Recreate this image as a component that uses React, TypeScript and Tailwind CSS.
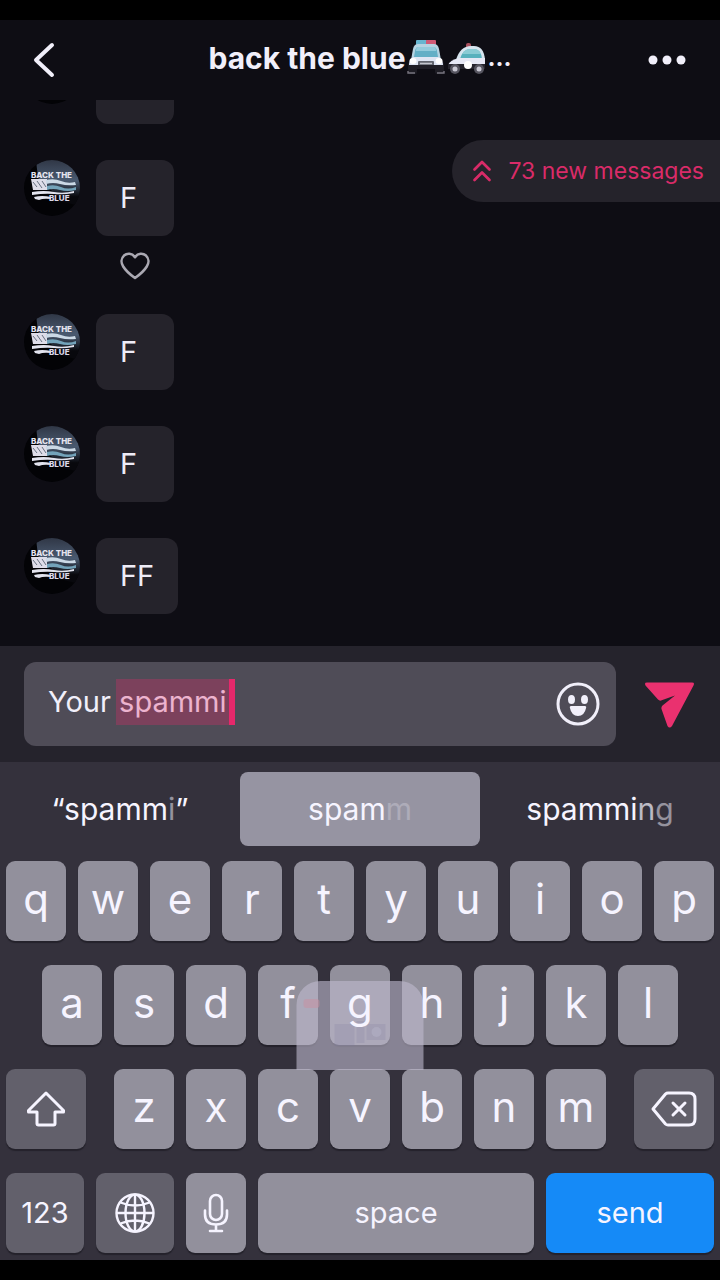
import React, { useState } from 'react';
import { ChevronsUp } from 'lucide-react';

interface Message {
  id: number;
  text: string;
  likeable?: boolean;
}

// the oldest entry is scrolled almost out of view, only its lower edge shows
const messages: Message[] = [
  { id: 1, text: '' },
  { id: 2, text: 'F', likeable: true },
  { id: 3, text: 'F' },
  { id: 4, text: 'F' },
  { id: 5, text: 'FF' },
];

const topRow = ['q', 'w', 'e', 'r', 't', 'y', 'u', 'i', 'o', 'p'];
const middleRow = ['a', 's', 'd', 'f', 'g', 'h', 'j', 'k', 'l'];
const bottomRow = ['z', 'x', 'c', 'v', 'b', 'n', 'm'];

const PoliceCarFront = () => (
  <svg viewBox="0 0 40 36" className="h-9 w-10" aria-hidden="true">
    <rect x="2" y="22" width="9" height="12" rx="2" fill="#1d1c24" />
    <rect x="29" y="22" width="9" height="12" rx="2" fill="#1d1c24" />
    <path d="M2 31v2h7M38 31v2h-7" fill="none" stroke="#77747f" strokeWidth="1.4" />
    <rect x="10" y="0" width="11" height="5" rx="1" fill="#67b5d0" />
    <rect x="20" y="0" width="10" height="5" rx="1" fill="#cf5a76" />
    <path d="M12 4h16q4 0 5 5l2 11H5L7 9q1-5 5-5z" fill="#b5d3e2" />
    <path d="M12 7h16q2 0 3 4l1 6H8l1-6q1-4 3-4z" fill="#63afc6" />
    <path d="M12 7h16q2 0 2 4H10q0-4 2-4z" fill="#93cbdc" />
    <path d="M7 17h26q4 3 4 8H3q0-5 4-8z" fill="#dfe5f3" />
    <ellipse cx="7" cy="21" rx="3.5" ry="3" fill="#fff" />
    <ellipse cx="33" cy="21" rx="3.5" ry="3" fill="#fff" />
    <rect x="12" y="21" width="16" height="5" rx="1" fill="#62656f" />
    <path d="M14 23.500h12" stroke="#c4c6ce" strokeWidth="1.500" />
    <path d="M3 25h34v4H3z" fill="#1f1e26" />
  </svg>
);

const PoliceCarSide = () => (
  <svg viewBox="0 0 42 36" className="h-9 w-[42px]" aria-hidden="true">
    <rect x="20" y="3" width="5" height="6" rx="2" fill="#a84f5d" />
    <path d="M10 20q4-14 15-14h3q10 0 11 14z" fill="#d6e4ee" />
    <path d="M14 19q3-10 10-10h4q7 0 8 10z" fill="#58b1bd" />
    <path d="M16 14q3-5 8-5h4q5 0 7 5z" fill="#8acbd4" />
    <path d="M2 25q2-5 11-7h26v8H2z" fill="#e6e8f5" />
    <path d="M2 24h37v5H2z" fill="#25242d" />
    <circle cx="22" cy="25" r="4" fill="#fff" />
    <circle cx="9" cy="29" r="5" fill="#55545f" />
    <circle cx="9" cy="29" r="2.500" fill="#c9c8d3" />
    <circle cx="33" cy="29" r="5" fill="#55545f" />
    <circle cx="33" cy="29" r="2.500" fill="#c9c8d3" />
  </svg>
);

const Avatar: React.FC<{ captioned: boolean }> = ({ captioned }) => (
  <svg viewBox="0 0 56 56" className="size-14 shrink-0 rounded-full" role="img" aria-label="Avatar">
    <defs>
      <linearGradient id="sky" x1="0" y1="0" x2="0" y2="1">
        <stop offset="0" stopColor="#303746" />
        <stop offset="0.45" stopColor="#4a5a70" />
        <stop offset="0.8" stopColor="#08080d" />
      </linearGradient>
    </defs>
    <rect width="56" height="56" fill="#030306" />
    <path d="M12 0h44v46l-16-4L14 18z" fill="url(#sky)" />
    <path d="M7 19h16v11H9z" fill="#dedde9" />
    <path d="M9 22l4 5M13 21l5 7M18 21l4 6" stroke="#66707f" strokeWidth="1" />
    <path d="M22 20q8-2 15 1t14 1l1 3q-9 1-16-1t-14 0z" fill="#cbd9e6" />
    <path d="M23 26q7-2 14 1t15 0v3q-9 2-16 0t-13 0z" fill="#73a3ba" />
    <path d="M8 32q12-2 22 0t20-1v2q-11 2-20 1T8 35zM10 37q8-2 17 0v2q-8-1-12 1l-4-1z" fill="#e2e3ee" />
    {captioned && (
      <>
        <text x="7" y="18" fontSize="8" fontWeight="800" fontFamily="Inter, sans-serif" fill="#e5e4ef">BACK THE</text>
        <text x="25" y="41" fontSize="8" fontWeight="800" fontFamily="Inter, sans-serif" fill="#dcd8e8">BLUE</text>
      </>
    )}
  </svg>
);

const MessageRow: React.FC<{ message: Message }> = ({ message }) => (
  <li className="flex items-start gap-4 px-6">
    <Avatar captioned={message.text !== ''} />
    <div className="flex flex-col items-start">
      <p className="h-19 min-w-[78px] rounded-xl bg-[#25232b] px-6 pt-5 text-[29px] leading-9 text-[#eeecf7]">
        {message.text}
      </p>
      {message.likeable && (
        <button type="button" aria-label="Like" className="mt-[18px] flex h-6 w-[78px] items-center justify-center">
          <svg viewBox="0 0 30 28" className="h-7 w-[30px] shrink-0" fill="none" stroke="#aaa8b2" strokeWidth="2.6" strokeLinejoin="round">
            <path d="M15 5.200C12 .9 7 1 4 3.600 1 6.400.9 11 3.200 14.500 5.600 18.400 10 22.500 15 26c5-3.500 9.400-7.600 11.800-11.500C29.100 11 29 6.400 26 3.600 23 1 18 .9 15 5.200z" />
          </svg>
        </button>
      )}
    </div>
  </li>
);

interface KeyProps {
  label: string;
  children?: React.ReactNode;
  dark?: boolean;
}

const Key: React.FC<KeyProps> = ({ label, children, dark }) => (
  <button
    type="button"
    aria-label={label}
    className={`flex h-20 min-w-0 flex-1 items-center justify-center rounded-[9px] text-[#f6f4ff] shadow-[0_2px_1px_#24222b] ${dark ? 'bg-[#62606b]' : 'bg-[#92909c]'}`}
  >
    {children ?? <span className="relative z-20 pb-1 text-[42px] leading-none">{label}</span>}
  </button>
);

const App: React.FC = () => {
  const [draft, setDraft] = useState('Your spammi');

  return (
    <div className="flex h-screen flex-col overflow-hidden bg-black py-5 font-[Inter,sans-serif]">
      <header className="flex h-20 shrink-0 items-center justify-between bg-[#0e0d14] px-8 text-[#f1effa]">
        <button type="button" aria-label="Back" className="flex w-10 items-center">
          <svg viewBox="0 0 24 36" className="h-9 w-6" fill="none" stroke="currentColor" strokeWidth="4" strokeLinecap="round" strokeLinejoin="round">
            <path d="M20 3L4 18l16 15" />
          </svg>
        </button>
        <h1 className="flex items-center pb-1 text-[30px] leading-9 font-bold">
          back the blue
          <PoliceCarFront />
          <PoliceCarSide />
          <span className="text-2xl">...</span>
        </h1>
        <button type="button" aria-label="More" className="flex w-10 items-center justify-end">
          <svg viewBox="0 0 40 10" className="h-[10px] w-10" fill="currentColor">
            <circle cx="5" cy="5" r="4.500" />
            <circle cx="19" cy="5" r="4.500" />
            <circle cx="33" cy="5" r="4.500" />
          </svg>
        </button>
      </header>

      <main className="relative flex min-h-0 flex-1 flex-col justify-end overflow-hidden bg-[#0e0d14] pb-8">
        <ul className="flex flex-col gap-9">
          {messages.map(message => (
            <MessageRow key={message.id} message={message} />
          ))}
        </ul>
        <button
          type="button"
          className="absolute top-10 right-0 flex h-[62px] items-center gap-2 rounded-l-full bg-[#25232b] pr-4 pl-3 text-[23px] text-[#d92b68]"
        >
          <ChevronsUp className="size-9" strokeWidth={1.8} />
          73 new messages
        </button>
      </main>

      <form className="flex h-[116px] shrink-0 items-center gap-7 bg-[#25232c] px-6" onSubmit={e => e.preventDefault()}>
        <div className="relative flex h-21 flex-1 items-center rounded-xl bg-[#4f4c57] pr-4 pl-6">
          <input
            type="text"
            aria-label="Message"
            value={draft}
            onChange={e => setDraft(e.target.value)}
            className="min-w-0 flex-1 bg-transparent pb-1 text-[29px] leading-9 text-[#f1effa] outline-none"
          />
          {/* marked text with the caret at its end */}
          <span className="pointer-events-none absolute top-[17px] left-[92px] h-[46px] w-[119px] border-r-6 border-[#e6286b] bg-[#e6286b]/30" />
          <button type="button" aria-label="Emoji" className="text-[#f1effa]">
            <svg viewBox="0 0 44 44" className="size-11">
              <circle cx="22" cy="22" r="20" fill="none" stroke="currentColor" strokeWidth="3" />
              <ellipse cx="15.500" cy="17.500" rx="3.500" ry="4.500" fill="currentColor" />
              <ellipse cx="28.500" cy="17.500" rx="3.500" ry="4.500" fill="currentColor" />
              <path d="M15 24h14q1.500 0 1.200 1.500Q28.500 34 22 34t-8.200-8.500Q13.500 24 15 24z" fill="currentColor" />
            </svg>
          </button>
        </div>
        <button type="submit" aria-label="Send message">
          <svg viewBox="0 0 52 48" className="h-12 w-[52px]" fill="#ea316f">
            <path d="M3 2.500h45q3 0 1.500 3L28 46q-2.500 3-4.500 0L17.500 29q-.5-2 1-3.500L31 15.500 17 20.500q-1.500.5-3-1L1.500 5.500Q0 2.500 3 2.500z" />
          </svg>
        </button>
      </form>

      <section aria-label="Keyboard" className="relative shrink-0 bg-[#34313c] pb-[7px]">
        <div className="grid grid-cols-3 pt-[10px] pb-[15px] text-[30px] text-[#f6f4ff]">
          <button type="button" className="h-[74px]">
            “spamm<span className="opacity-50">i</span>”
          </button>
          <button type="button" className="h-[74px] rounded-lg bg-[#9694a2]">
            spam<span className="opacity-25">m</span>
          </button>
          <button type="button" className="h-[74px]">
            spammi<span className="opacity-70">n</span><span className="opacity-50">g</span>
          </button>
        </div>

        <div className="flex flex-col gap-6">
          <div className="flex gap-3 px-[6px]">
            {topRow.map(k => <Key key={k} label={k} />)}
          </div>
          <div className="flex gap-3 px-[42px]">
            {middleRow.map(k => <Key key={k} label={k} />)}
          </div>
          <div className="grid grid-cols-[80fr_492fr_80fr] gap-7 px-[6px]">
            <Key label="Shift" dark>
              <svg viewBox="0 0 40 36" className="h-9 w-10" fill="none" stroke="currentColor" strokeWidth="3" strokeLinejoin="round">
                <path d="M20 2L2.500 19.500v1.500H11v11.500q0 1.500 1.500 1.500h15q1.500 0 1.500-1.500V21h8.500v-1.500z" />
              </svg>
            </Key>
            <div className="flex gap-3">
              {bottomRow.map(k => <Key key={k} label={k} />)}
            </div>
            <Key label="Backspace" dark>
              <svg viewBox="0 0 46 36" className="h-9 w-[46px]" fill="none" stroke="currentColor" strokeWidth="3" strokeLinejoin="round" strokeLinecap="round">
                <path d="M17 2h21q6 0 6 6v20q0 6-6 6H17q-1.500 0-2.500-1L2 18 14.500 3q1-1 2.500-1z" />
                <path d="M22 12l12 12M34 12L22 24" />
              </svg>
            </Key>
          </div>
          <div className="grid grid-cols-[78fr_78fr_60fr_276fr_168fr] gap-3 px-[6px] text-[29px]">
            <Key label="123" dark>123</Key>
            <Key label="Next keyboard" dark>
              <svg viewBox="0 0 40 40" className="size-10" fill="none" stroke="currentColor" strokeWidth="2.400">
                <circle cx="20" cy="20" r="18.500" />
                <ellipse cx="20" cy="20" rx="9.500" ry="18.500" />
                <path d="M20 1.500v37M1.500 20h37M5.500 9.500q14.500 6 29 0M5.500 30.500q14.500-6 29 0" />
              </svg>
            </Key>
            <Key label="Dictate">
              <svg viewBox="0 0 26 40" className="h-10 w-[26px]" fill="none" stroke="currentColor" strokeWidth="2.600" strokeLinecap="round">
                <rect x="7" y="2" width="12" height="25" rx="6" />
                <path d="M2 17.500v4q0 10 11 10t11-10v-4M13 31.500V38M7 38h12" />
              </svg>
            </Key>
            <Key label="Space">space</Key>
            <button type="button" className="h-20 rounded-[9px] bg-[#158af7] text-[#f6f4ff] shadow-[0_2px_1px_#24222b]">
              send
            </button>
          </div>
        </div>

        {/* record badge showing through the keys */}
        <div className="pointer-events-none absolute bottom-[190px] left-1/2 z-10 h-[89px] w-[127px] -translate-x-1/2 rounded-t-[24px] bg-[#c0bacf]/60">
          <svg viewBox="0 0 127 89" className="h-full w-full" aria-hidden="true">
            <rect x="7" y="18" width="16" height="9" rx="3" fill="#c9909f" opacity="0.500" />
            <path d="M38 43h20v22H38zM60 40h8v22h-8zM70 43h19v16H70z" fill="#7e7a9f" opacity="0.200" />
            <circle cx="80" cy="51" r="5" fill="#b6b3c8" opacity="0.500" />
          </svg>
        </div>
      </section>
    </div>
  );
};

export default App;
